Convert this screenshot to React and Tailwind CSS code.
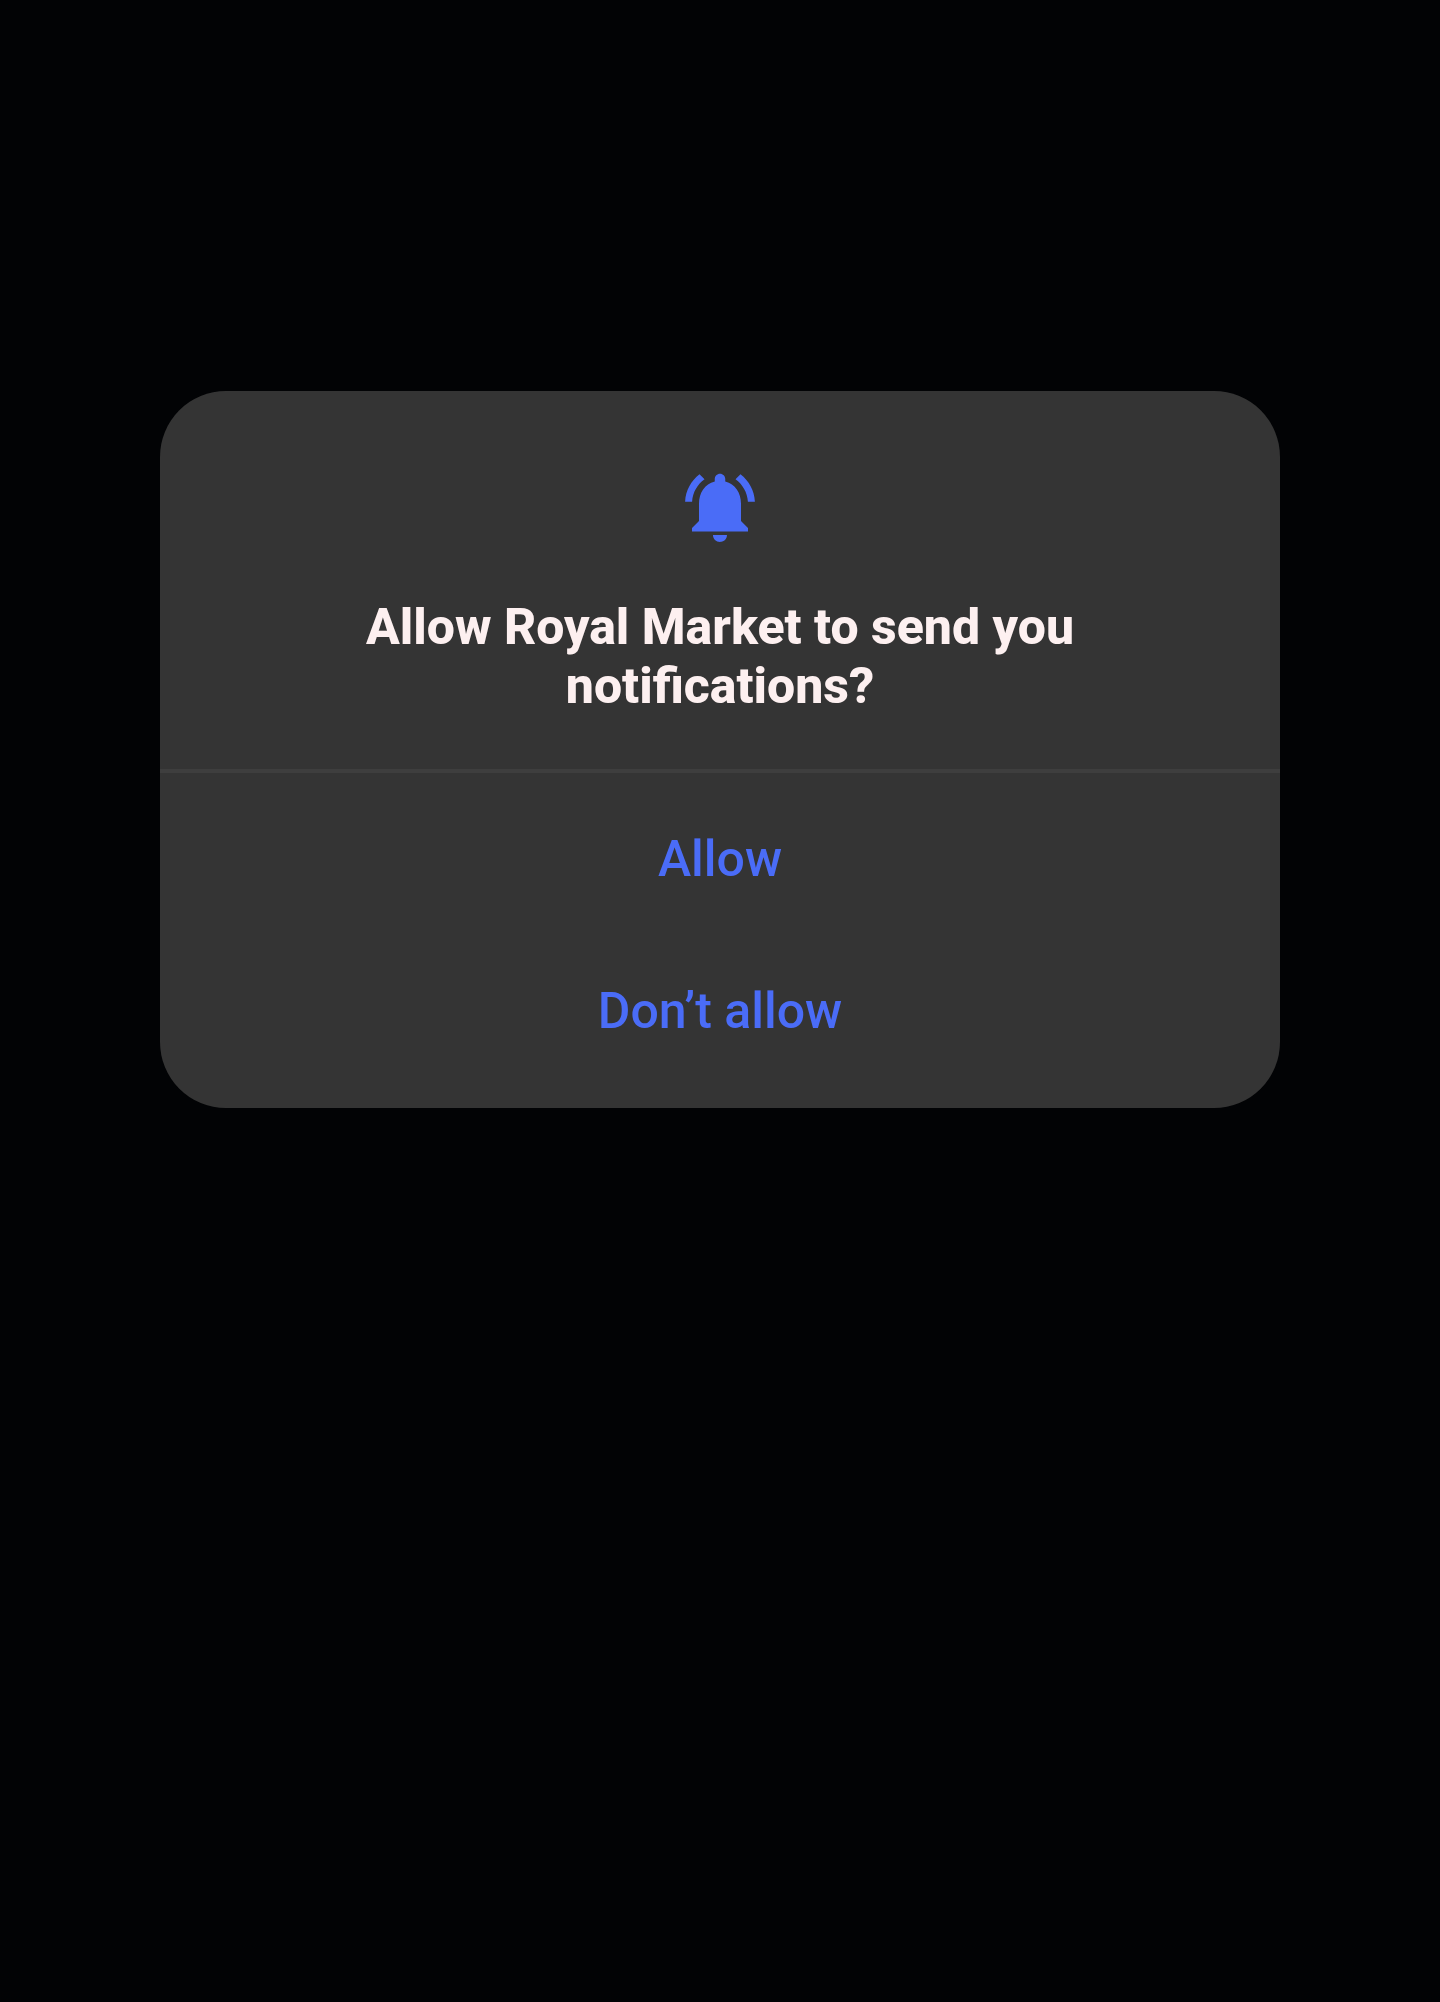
import React from "react";

const BellIcon = () => (
  <svg viewBox="0 0 24 24" className="w-[84px] h-[84px] fill-[#4a6cf7]">
    <path d="M7.58 4.08L6.15 2.65C3.75 4.48 2.17 7.3 2.03 10.5h2c.15-2.65 1.51-4.97 3.55-6.42zm12.39 6.42h2c-.15-3.2-1.73-6.02-4.12-7.85l-1.42 1.43c2.02 1.45 3.39 3.77 3.54 6.42zM18 11c0-3.07-1.64-5.64-4.5-6.32V4c0-.83-.67-1.5-1.5-1.5s-1.5.67-1.5 1.5v.68C7.63 5.36 6 7.92 6 11v5l-2 2v1h16v-1l-2-2v-5zm-6 11c.14 0 .27-.01.4-.04.65-.14 1.18-.58 1.44-1.18.1-.24.15-.5.15-.78h-4c.01 1.1.9 2 2.01 2z" />
  </svg>
);

const ActionButton = ({ children }) => (
  <button className="w-full h-[152px] flex items-center justify-center text-[50px] font-medium text-[#4a6cf7]">
    {children}
  </button>
);

export default function App() {
  return (
    <div className="min-h-[2002px] bg-[#020305] pt-[391px] font-['Roboto',sans-serif]">
      <div className="w-[1120px] mx-auto bg-[#343434] rounded-[66px] overflow-hidden">
        <div className="h-[378px] pt-[74px] flex flex-col items-center">
          <BellIcon />
          <h2 className="mt-[49px] w-[800px] text-center text-[50px] leading-[59px] font-extrabold text-[#fdf0f0]">
            Allow Royal Market to send you notifications?
          </h2>
        </div>
        <div className="h-[4px] bg-[#3e3e3e]" />
        <div className="pt-[10px] pb-[21px]">
          <ActionButton>Allow</ActionButton>
          <ActionButton>Don’t allow</ActionButton>
        </div>
      </div>
    </div>
  );
}
